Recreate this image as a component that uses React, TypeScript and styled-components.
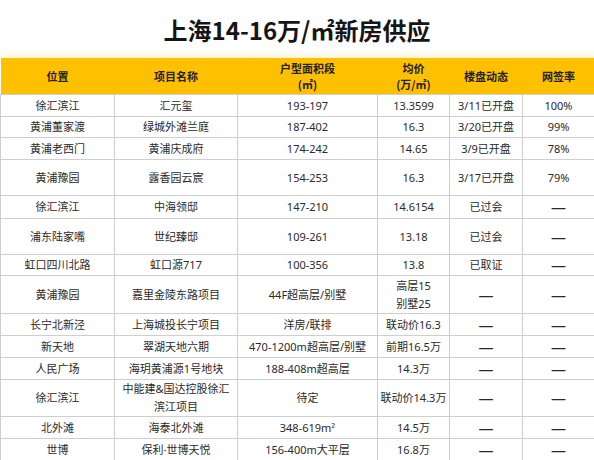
import React from 'react';
import styled, { createGlobalStyle } from 'styled-components';

const GlobalStyle = createGlobalStyle`
  body {
    margin: 0;
    background: #fff;
    font-family: "Noto Sans CJK SC", "Noto Sans", sans-serif;
  }
`

type Row = { h: number; cells: string[] }

const rows: Row[] = [
  { h: 22, cells: ['徐汇滨江', '汇元玺', '193-197', '13.3599', '3/11已开盘', '100%'] },
  { h: 21, cells: ['黄浦董家渡', '绿城外滩兰庭', '187-402', '16.3', '3/20已开盘', '99%'] },
  { h: 22, cells: ['黄浦老西门', '黄浦庆成府', '174-242', '14.65', '3/9已开盘', '78%'] },
  { h: 36, cells: ['黄浦豫园', '露香园云宸', '154-253', '16.3', '3/17已开盘', '79%'] },
  { h: 23, cells: ['徐汇滨江', '中海领邸', '147-210', '14.6154', '已过会', '—'] },
  { h: 36, cells: ['浦东陆家嘴', '世纪臻邸', '109-261', '13.18', '已过会', '—'] },
  { h: 21, cells: ['虹口四川北路', '虹口源717', '100-356', '13.8', '已取证', '—'] },
  { h: 38, cells: ['黄浦豫园', '嘉里金陵东路项目', '44F超高层/别墅', '高层15\n别墅25', '—', '—'] },
  { h: 22, cells: ['长宁北新泾', '上海城投长宁项目', '洋房/联排', '联动价16.3', '—', '—'] },
  { h: 22, cells: ['新天地', '翠湖天地六期', '470-1200m超高层/别墅', '前期16.5万', '—', '—'] },
  { h: 22, cells: ['人民广场', '海玥黄浦源1号地块', '188-408m超高层', '14.3万', '—', '—'] },
  { h: 36, cells: ['徐汇滨江', '中能建&国达控股徐汇\n滨江项目', '待定', '联动价14.3万', '—', '—'] },
  { h: 22, cells: ['北外滩', '海泰北外滩', '348-619m²', '14.5万', '—', '—'] },
  { h: 23, cells: ['世博', '保利·世博天悦', '156-400m大平层', '16.8万', '—', '—'] },
]

const widths = [114, 123, 140, 72, 73, 72]

const App = () => {
  return (
    <>
      <GlobalStyle />
      <Sheet>
        <Title>上海14-16万/㎡新房供应</Title>
        <Table>
          <colgroup>
            {widths.map((w, i) => <col key={i} style={{ width: w }} />)}
          </colgroup>
          <thead>
            <tr>
              <HeadCell>位置</HeadCell>
              <HeadCell>项目名称</HeadCell>
              <HeadCell>户型面积段<br />(㎡)</HeadCell>
              <HeadCell>均价<br />(万/㎡)</HeadCell>
              <HeadCell>楼盘动态</HeadCell>
              <HeadCell>网签率</HeadCell>
            </tr>
          </thead>
          <tbody>
            {rows.map((r, i) => (
              <BodyRow key={i} $h={r.h}>
                {r.cells.map((c, j) => (
                  <Cell key={j} $dash={c === '—'}>
                    {c.split('\n').map((line, k) => <Line key={k}>{line}</Line>)}
                  </Cell>
                ))}
              </BodyRow>
            ))}
          </tbody>
        </Table>
      </Sheet>
    </>
  )
}

export default App

const Sheet = styled.div`
  width: 594px;
  height: 460px;
  overflow: hidden;
  background: #fff;
`

const Title = styled.h1`
  margin: 0;
  height: 58px;
  display: flex;
  align-items: center;
  justify-content: center;
  font-size: 24px;
  font-weight: 700;
  color: #151515;
  background: linear-gradient(to bottom, #fff 0, #fff 50px, #fff6d8 58px);
`

const Table = styled.table`
  width: 594px;
  table-layout: fixed;
  border-collapse: collapse;
  font-size: 11px;
  color: #2a2a2a;
`

const HeadCell = styled.th`
  height: 36px;
  padding: 0;
  background: #ffc000;
  color: #222;
  font-weight: 700;
  font-size: 11px;
  line-height: 16px;
  text-align: center;
  vertical-align: middle;
`

const BodyRow = styled.tr<{ $h: number }>`
  height: ${p => p.$h}px;
`

const Cell = styled.td<{ $dash?: boolean }>`
  padding: 0;
  border: 1px solid #cfcfcf;
  font-family: "Noto Sans", "Noto Sans CJK SC", sans-serif;
  font-size: ${p => (p.$dash ? '15px' : '11px')};
  text-align: center;
  vertical-align: middle;
  line-height: 18px;
  white-space: nowrap;
`

const Line = styled.div`
  display: block;
`
